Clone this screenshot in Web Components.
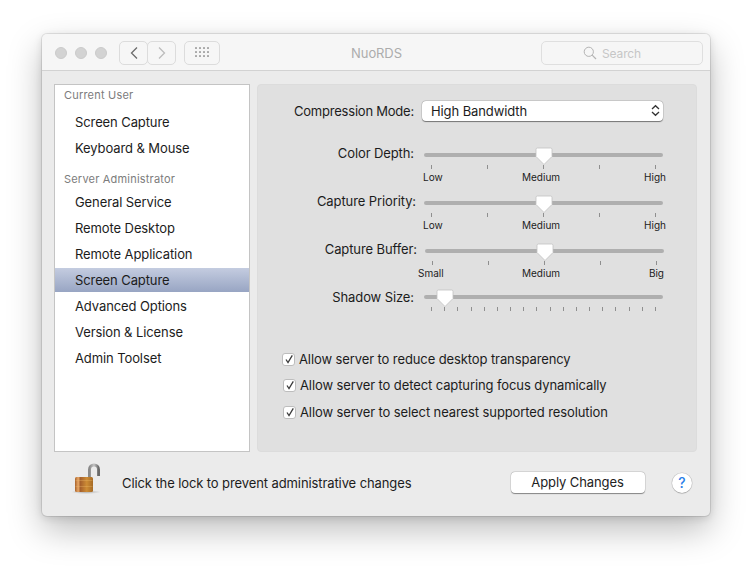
<!DOCTYPE html>
<html><head><meta charset="utf-8"><style>
html,body{margin:0;background:#fff}
body{padding:34px 0 0 42px;height:566px;box-sizing:border-box;overflow:hidden;font:13px Inter,"Liberation Sans",sans-serif;color:#1c1c1c;letter-spacing:-.1px}
</style></head><body>
<nu-window>
  <nu-titlebar slot="top">NuoRDS</nu-titlebar>
  <nu-sidebar slot="side">
    <nu-head>Current User</nu-head>
    <nu-item>Screen Capture</nu-item>
    <nu-item>Keyboard &amp; Mouse</nu-item>
    <nu-head second>Server Administrator</nu-head>
    <nu-item>General Service</nu-item>
    <nu-item>Remote Desktop</nu-item>
    <nu-item>Remote Application</nu-item>
    <nu-item selected>Screen Capture</nu-item>
    <nu-item>Advanced Options</nu-item>
    <nu-item>Version &amp; License</nu-item>
    <nu-item>Admin Toolset</nu-item>
  </nu-sidebar>
  <nu-panel slot="main">
    <nu-select label="Compression Mode:">High Bandwidth</nu-select>
    <nu-slider label="Color Depth:" value="120" low="Low" mid="Medium" high="High" lead="-1" midstart="99" end="3"></nu-slider>
    <nu-slider label="Capture Priority:" labelshift="2" value="120" low="Low" mid="Medium" high="High" lead="-1" midstart="99" end="3"></nu-slider>
    <nu-slider label="Capture Buffer:" labelshift="3" shift="1" value="120" low="Small" mid="Medium" high="Big" lead="-7" midstart="104" end="0" tight></nu-slider>
    <nu-slider label="Shadow Size:" value="21" ticks="18" labeldrop="2"></nu-slider>
    <nu-check style="margin-top:17px">Allow server to reduce desktop transparency</nu-check>
    <nu-check nudge>Allow server to detect capturing focus dynamically</nu-check>
    <nu-check nudge style="margin-top:13px">Allow server to select nearest supported resolution</nu-check>
  </nu-panel>
  <nu-footer slot="bottom">Click the lock to prevent administrative changes</nu-footer>
</nu-window>
<script>
function def(name, css, html){
  customElements.define(name, class extends HTMLElement{
    constructor(){super();this.attachShadow({mode:'open'});}
    connectedCallback(){
      this.shadowRoot.innerHTML='<style>'+css+'</style>'+(typeof html==='function'?html(this):html);
    }
  });
}
def('nu-window',`
:host{display:flex;flex-direction:column;width:668px;height:482px;background:#ebebeb;border-radius:5px;
 box-shadow:0 0 0 1px rgba(0,0,0,.09),0 14px 34px rgba(0,0,0,.26),0 2px 8px rgba(0,0,0,.12)}
.mid{display:flex;gap:7px;padding:13px 13px 0 12px;height:368px}
`,`<slot name="top"></slot><div class="mid"><slot name="side"></slot><slot name="main"></slot></div><slot name="bottom"></slot>`);
def('nu-titlebar',`
:host{display:flex;align-items:center;height:37px;box-sizing:border-box;background:#f6f6f6;border-bottom:1px solid #d2d2d2;border-radius:5px 5px 0 0;padding:1px 7px 0 13px}
.dot{width:12px;height:12px;border-radius:50%;background:#d3d3d3;border:.5px solid #cbcbcb;box-sizing:border-box;margin-right:8px}
.btn{height:24px;box-sizing:border-box;border:1px solid #dcdcdc;border-radius:5px;background:#f6f6f6;display:flex;align-items:center;justify-content:center}
.title{flex:1;text-align:center;color:#acacac;font-size:13px;position:relative;left:-4px;padding-top:1px}
.search{width:162px;height:24px;box-sizing:border-box;border:1px solid #dfdfdf;border-radius:5px;display:flex;align-items:center;justify-content:center;gap:5px;color:#c6c6c6;font-size:12px;padding:2px 20px 0 0}
.search svg{margin-top:-2px}
`,`<div class="dot"></div><div class="dot"></div><div class="dot" style="margin-right:0"></div>
<div class="btn" style="width:29px;margin-left:12px"><svg width="10" height="14" viewBox="0 0 10 14"><path d="M8 1.500 2.500 7 8 12.500" fill="none" stroke="#6c6c6c" stroke-width="1.300"/></svg></div>
<div class="btn" style="width:29px;margin-left:-1px"><svg width="10" height="14" viewBox="0 0 10 14"><path d="M2 1.500 7.500 7 2 12.500" fill="none" stroke="#bcbcbc" stroke-width="1.300"/></svg></div>
<div class="btn" style="width:36px;margin-left:8px"><svg width="16" height="11" viewBox="0 0 16 11" fill="#a8a8a8"><rect x="1" y="0" width="2" height="2" rx=".5"/><rect x="5" y="0" width="2" height="2" rx=".5"/><rect x="9" y="0" width="2" height="2" rx=".5"/><rect x="13" y="0" width="2" height="2" rx=".5"/><rect x="1" y="4" width="2" height="2" rx=".5"/><rect x="5" y="4" width="2" height="2" rx=".5"/><rect x="9" y="4" width="2" height="2" rx=".5"/><rect x="13" y="4" width="2" height="2" rx=".5"/><rect x="1" y="8" width="2" height="2" rx=".5"/><rect x="5" y="8" width="2" height="2" rx=".5"/><rect x="9" y="8" width="2" height="2" rx=".5"/><rect x="13" y="8" width="2" height="2" rx=".5"/></svg></div>
<div class="title"><slot></slot></div>
<div class="search"><svg width="14" height="14" viewBox="0 0 14 14"><circle cx="5.800" cy="5.800" r="4.600" fill="none" stroke="#b4b4b4" stroke-width="1"/><path d="M9.200 9.200 13 13" stroke="#b4b4b4" stroke-width="1.200"/></svg><span>Search</span></div>`);
def('nu-sidebar',`
:host{display:flex;flex-direction:column;width:196px;height:368px;box-sizing:border-box;background:#fff;border:1px solid #c4c4c4;gap:2px}
`,`<slot></slot>`);
def('nu-head',`
:host{display:flex;align-items:center;height:20px;padding-left:9px;font-size:11px;color:#7c7c7c;letter-spacing:.2px;margin-bottom:3px}
:host([second]){margin:7px 0 -1px}
`,`<slot></slot>`);
def('nu-item',`
:host{display:flex;align-items:center;height:24px;padding-left:20px;font-size:13px}
:host([selected]){background:linear-gradient(#c4cce0,#98a5c3)}
`,`<slot></slot>`);
def('nu-panel',`
:host{display:block;width:440px;height:368px;box-sizing:border-box;background:#e0e0e0;border:1px solid #dcdcdc;border-radius:4px;padding:16px 0 0 0}
`,`<slot></slot>`);
def('nu-select',`
:host{display:flex;align-items:center;height:20px;margin-bottom:24px}
.l{width:156px;text-align:right;white-space:nowrap;letter-spacing:-.22px;padding-bottom:1px}
.s{margin-left:8px;width:241px;height:20px;box-sizing:border-box;background:#fff;border-radius:4px;box-shadow:0 .5px 1px rgba(0,0,0,.45),0 0 0 .5px rgba(0,0,0,.12);display:flex;align-items:center;justify-content:space-between;padding:0 3px 1px 9px}
`,h=>`<div class="l">${h.getAttribute('label')}</div><div class="s"><slot></slot><svg width="9" height="13" viewBox="0 0 9 13" fill="none" stroke="#333" stroke-width="1.300"><path d="M1 5 4.500 1.700 8 5M1 8 4.500 11.300 8 8"/></svg></div>`);
def('nu-slider',`
:host{display:flex;height:48px}
:host([tight]){height:46px}
.l{text-align:right;white-space:nowrap;height:16px;line-height:16px}
.a{width:239px;position:relative}
.t{height:4px;border-radius:2px;background:#afafaf;margin-top:8px}
.ticks{display:flex;justify-content:space-between;margin:8px 7px 0 7px;height:4px}
.ticks i{display:block;width:1px;height:4px;background:#8f8f8f}
.n{display:grid;font-size:10px;letter-spacing:0;line-height:13px;margin-top:2px;white-space:nowrap}
.n span:last-child{text-align:right}
svg{position:absolute;top:1px}
`,h=>{
 const g=a=>h.getAttribute(a);
 const ls=+(g('labelshift')||0),sh=+(g('shift')||0),n=+(g('ticks')||5),v=+g('value'),d=+(g('labeldrop')||0);
 const t='<i></i>'.repeat(n);
 const lab=g('low')?`<div class="n" style="margin-left:${g('lead')}px;margin-right:${-g('end')}px;grid-template-columns:${g('midstart')}px auto 1fr"><span>${g('low')}</span><span>${g('mid')}</span><span>${g('high')}</span></div>`:'';
 return `<div class="l" style="width:${156+ls}px;margin-top:${d}px">${g('label')}</div>
 <div class="a" style="margin-left:${10+sh-ls}px"><div class="t"></div><div class="ticks">${t}</div>${lab}
 <svg width="20" height="20" viewBox="0 0 20 20" style="left:${v-10}px"><path d="M2 3.500Q2 2 3.500 2H16.500Q18 2 18 3.500V10.500L10 18.500 2 10.500Z" fill="#fff" stroke="#c2c2c2" stroke-width=".8"/></svg></div>`;
});
def('nu-check',`
:host{display:flex;align-items:center;height:14px;margin:12px 0 0 24px;gap:4px}
:host([nudge]){margin-left:25px}
.b{width:13px;height:13px;box-sizing:border-box;background:#fff;border:1px solid #bdbdbd;border-radius:3px;display:flex;align-items:center;justify-content:center}
`,`<div class="b"><svg width="10" height="10" viewBox="0 0 10 10"><path d="M2 5.500 4 8.500 8.300 1.300" fill="none" stroke="#3a3a3a" stroke-width="1.300"/></svg></div><span><slot></slot></span>`);
def('nu-footer',`
:host{display:flex;align-items:center;height:64px;padding:0 0 3px 28px;box-sizing:border-box}
.txt{margin-left:20px;width:388px;white-space:nowrap}
.btn{width:134px;margin-left:.5px;height:21px;box-sizing:border-box;background:#fff;border-radius:4px;box-shadow:0 .5px 1px rgba(0,0,0,.4),0 0 0 .5px rgba(0,0,0,.12);display:flex;align-items:center;justify-content:center;color:#222;padding-bottom:1px}
.help{width:20px;height:20px;margin-left:27.5px;box-sizing:border-box;border-radius:50%;background:#fff;box-shadow:0 0 0 .5px rgba(0,0,0,.14),0 .5px 1px rgba(0,0,0,.25);display:flex;align-items:center;justify-content:center;color:#2a7ee8;font-size:14px;font-weight:500}
`,`<svg width="32" height="32" viewBox="0 0 32 32" style="flex:none;margin-top:-7px">
<defs><linearGradient id="b" x1="0" x2="1" y1="0" y2="0"><stop offset="0" stop-color="#a8622a"/><stop offset=".18" stop-color="#e8a868"/><stop offset=".3" stop-color="#a5602c"/><stop offset=".65" stop-color="#cd8c35"/><stop offset="1" stop-color="#a56a25"/></linearGradient>
<linearGradient id="s" x1="0" x2="1" y1="0" y2="0"><stop offset="0" stop-color="#8a8a8a"/><stop offset=".5" stop-color="#c4c4c4"/><stop offset="1" stop-color="#6a6a6a"/></linearGradient>
<radialGradient id="sh"><stop offset="0" stop-color="#888" stop-opacity=".6"/><stop offset="1" stop-color="#888" stop-opacity="0"/></radialGradient></defs>
<ellipse cx="16" cy="29" rx="15" ry="2" fill="url(#sh)"/>
<path d="M19.500 14V6.500C19.500 .5 28.500 .5 28.500 6.500V13" fill="none" stroke="url(#s)" stroke-width="3"/>
<rect x="5" y="14" width="18" height="15" rx="1.500" fill="url(#b)"/>
<path d="M5.500 17.500H22.500M5.500 23.500H22.500" stroke="#f0c070" stroke-width=".6" opacity=".55"/>
</svg><div class="txt"><slot></slot></div><div class="btn">Apply Changes</div><div class="help">?</div>`);
</script>
</body></html>
